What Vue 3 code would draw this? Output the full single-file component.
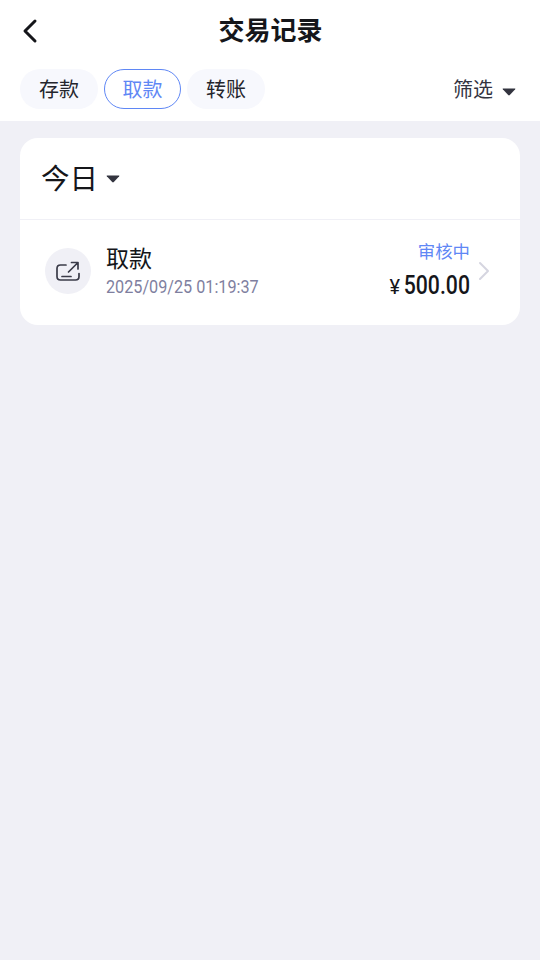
<script setup>
const tabs = [
  { label: '存款', active: false },
  { label: '取款', active: true },
  { label: '转账', active: false },
]
</script>

<template>
  <div class="page">
    <header class="top">
      <div class="nav">
        <svg class="back" width="20" height="30" viewBox="0 0 20 30" fill="none">
          <path d="M15 5 L5 15 L15 25" stroke="#15161a" stroke-width="3" stroke-linecap="round" stroke-linejoin="round" />
        </svg>
        <h1 class="title">交易记录</h1>
      </div>
      <div class="filters">
        <div class="tabs">
          <span v-for="t in tabs" :key="t.label" class="tab" :class="{ active: t.active }">{{ t.label }}</span>
        </div>
        <div class="screen">
          <span class="screen-label">筛选</span>
          <svg class="caret" width="14" height="8" viewBox="0 0 14 8"><path d="M1 .5 H13 Q13.6 .5 13.2 1.2 L7.8 7 Q7 7.8 6.2 7 L.8 1.2 Q.4 .5 1 .5Z" fill="#33343f" /></svg>
        </div>
      </div>
    </header>

    <main class="body">
      <section class="card">
        <div class="day">
          <span class="day-label">今日</span>
          <svg width="14" height="8" viewBox="0 0 14 8"><path d="M1 .5 H13 Q13.6 .5 13.2 1.2 L7.8 7 Q7 7.8 6.2 7 L.8 1.2 Q.4 .5 1 .5Z" fill="#33343f" /></svg>
        </div>
        <div class="row">
          <div class="icon">
            <svg width="24" height="20" viewBox="0 0 24 20" fill="none" stroke="#3a3b48" stroke-width="1.7" stroke-linecap="round" stroke-linejoin="round">
              <path d="M10 4 H4.5 Q1 4 1 7.5 V15.5 Q1 19 4.5 19 H19.5 Q23 19 23 15.5 V12.5" />
              <path d="M6 15.5 H15" />
              <path d="M12.5 11 L21.5 2 M15.5 1.5 H22 V8" />
            </svg>
          </div>
          <div class="info">
            <div class="name">取款</div>
            <div class="date">2025/09/25 01:19:37</div>
          </div>
          <div class="amount">
            <div class="status">审核中</div>
            <div class="money"><span class="yen">¥</span><span class="num">500.00</span></div>
          </div>
          <svg class="chev" width="12" height="20" viewBox="0 0 12 20" fill="none">
            <path d="M2 2 L10 10 L2 18" stroke="#d5d5e0" stroke-width="2" stroke-linecap="round" stroke-linejoin="round" />
          </svg>
        </div>
      </section>
    </main>
  </div>
</template>

<style>
html, body { margin: 0; padding: 0; }
</style>

<style scoped>
.page {
  width: 540px;
  height: 960px;
  display: flex;
  flex-direction: column;
  background: #f0f0f6;
  font-family: "Roboto", "Noto Sans CJK SC", sans-serif;
  color: #15161a;
  overflow: hidden;
}
.top { background: #fff; height: 121px; padding: 0 20px; box-sizing: border-box; }
.nav { position: relative; height: 61px; display: flex; align-items: center; justify-content: center; }
.back { position: absolute; left: 0; top: 16px; }
.title { margin: 0; font-size: 26px; font-weight: 700; line-height: 62px; padding-left: 1px; }
.filters { display: flex; justify-content: space-between; align-items: center; margin-top: 8px; }
.tabs { display: flex; gap: 6px; }
.tab {
  box-sizing: border-box;
  width: 78px;
  height: 40px;
  border-radius: 20px;
  background: #f7f8fd;
  font-size: 20px;
  line-height: 42px;
  text-align: center;
  color: #24252c;
}
.tab.active {
  background: #fff;
  border: 1px solid #5f87f5;
  color: #5f87f5;
  line-height: 40px;
  width: 77px;
}
.screen { display: flex; align-items: center; gap: 9px; font-size: 20px; color: #33343f; padding-right: 4px; height: 38px; }
.screen-label { line-height: 38px; margin-top: 2px; }
.caret { margin-top: 5px; }
.body { flex: 1; padding: 17px 20px; }
.card { background: #fff; border-radius: 18px; height: 187px; }
.day {
  height: 82px;
  padding-left: 21px;
  box-sizing: border-box;
  display: flex;
  align-items: center;
  gap: 8px;
  font-size: 28.5px;
  border-bottom: 1px solid #f0f0f6;
}
.day-label { line-height: 40px; margin-top: 3px; }
.row { display: flex; align-items: center; height: 105px; padding: 0 50px 0 25px; position: relative; }
.icon {
  width: 46px;
  height: 46px;
  border-radius: 50%;
  background: #f0f0f6;
  display: flex;
  align-items: center;
  justify-content: center;
  margin-right: 15px;
  margin-top: -4px;
}
.info { flex: 1; margin-top: -2px; }
.name { font-size: 23px; line-height: 30px; }
.date { font-size: 18px; line-height: 24px; color: #7f7f9f; transform: scaleX(.9); transform-origin: left; white-space: nowrap; }
.amount { text-align: right; margin-top: -2px; }
.status { font-size: 17.4px; line-height: 24px; color: #5f87f5; }
.money { font-size: 25px; font-weight: 500; line-height: 34px; margin-top: 5px; display: flex; justify-content: flex-end; align-items: baseline; }
.yen { font-size: 20px; font-weight: 400; }
.num { transform: scaleX(.85); transform-origin: right; margin-left: -8px; }
.chev { position: absolute; right: 30px; top: 41px; }
</style>
